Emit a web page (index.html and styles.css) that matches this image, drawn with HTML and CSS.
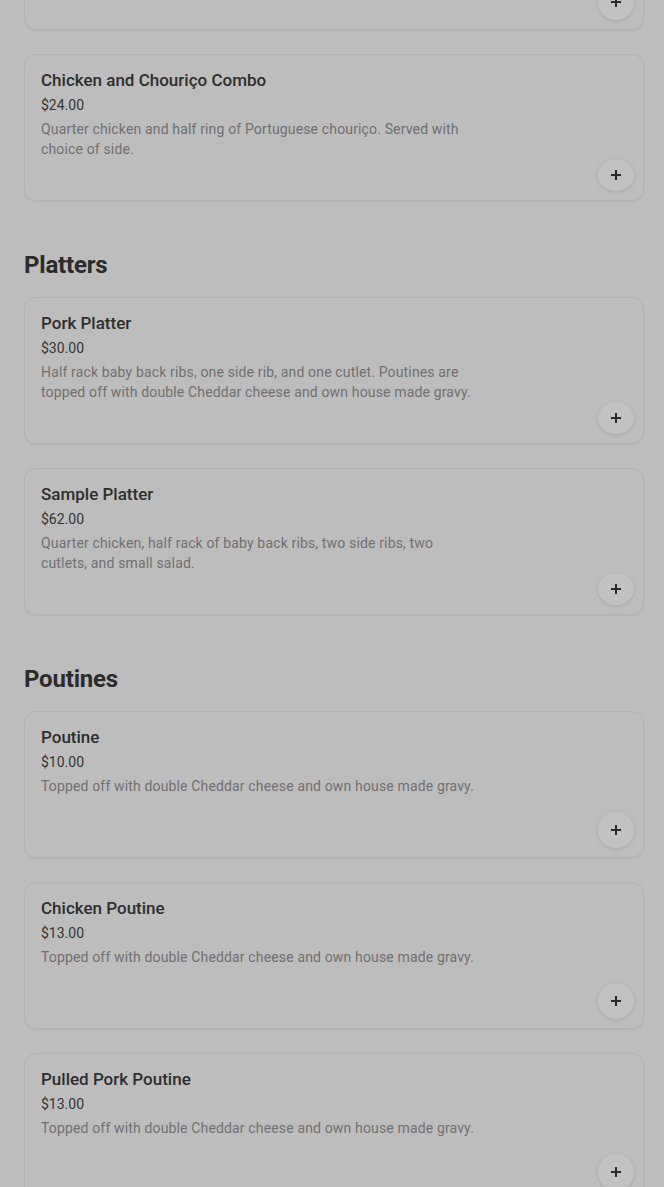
FILE: index.html
```html
<!DOCTYPE html>
<html>
<head>
<meta charset="utf-8">
<meta name="viewport" content="width=device-width, initial-scale=1">
<link rel="stylesheet" href="styles.css">
</head>
<body>
  <div class="menu">
    <div class="section">
      <div class="item">
        <button class="add"><svg viewBox="0 0 12 12"><path d="M6 1v10M1 6h10"/></svg></button>
      </div>
      <div class="item">
        <h3 class="item-name">Chicken and Chouriço Combo</h3>
        <p class="item-price">$24.00</p>
        <p class="item-desc">Quarter chicken and half ring of Portuguese chouriço. Served with choice of side.</p>
        <button class="add"><svg viewBox="0 0 12 12"><path d="M6 1v10M1 6h10"/></svg></button>
      </div>
    </div>

    <div class="section">
      <h2 class="section-title">Platters</h2>
      <div class="item">
        <h3 class="item-name">Pork Platter</h3>
        <p class="item-price">$30.00</p>
        <p class="item-desc">Half rack baby back ribs, one side rib, and one cutlet. Poutines are topped off with double Cheddar cheese and own house made gravy.</p>
        <button class="add"><svg viewBox="0 0 12 12"><path d="M6 1v10M1 6h10"/></svg></button>
      </div>
      <div class="item">
        <h3 class="item-name">Sample Platter</h3>
        <p class="item-price">$62.00</p>
        <p class="item-desc">Quarter chicken, half rack of baby back ribs, two side ribs, two cutlets, and small salad.</p>
        <button class="add"><svg viewBox="0 0 12 12"><path d="M6 1v10M1 6h10"/></svg></button>
      </div>
    </div>

    <div class="section">
      <h2 class="section-title">Poutines</h2>
      <div class="item">
        <h3 class="item-name">Poutine</h3>
        <p class="item-price">$10.00</p>
        <p class="item-desc">Topped off with double Cheddar cheese and own house made gravy.</p>
        <button class="add"><svg viewBox="0 0 12 12"><path d="M6 1v10M1 6h10"/></svg></button>
      </div>
      <div class="item">
        <h3 class="item-name">Chicken Poutine</h3>
        <p class="item-price">$13.00</p>
        <p class="item-desc">Topped off with double Cheddar cheese and own house made gravy.</p>
        <button class="add"><svg viewBox="0 0 12 12"><path d="M6 1v10M1 6h10"/></svg></button>
      </div>
      <div class="item">
        <h3 class="item-name">Pulled Pork Poutine</h3>
        <p class="item-price">$13.00</p>
        <p class="item-desc">Topped off with double Cheddar cheese and own house made gravy.</p>
        <button class="add"><svg viewBox="0 0 12 12"><path d="M6 1v10M1 6h10"/></svg></button>
      </div>
    </div>
  </div>
</body>
</html>
```
FILE: styles.css
```css
html {
  background-color: #bdbdbd;
}

body {
  margin: 0;
  font-family: Roboto, "Noto Sans", sans-serif;
  color: #2e2e2e;
  overflow: hidden;
}

.menu {
  margin-top: -117px;
  padding: 0 20px 0 24px;
}

.section {
  display: flex;
  flex-direction: column;
  gap: 24px;
}

.section-title {
  margin: 48px 0 -8px;
  font-size: 24px;
  font-weight: 700;
  line-height: 32px;
  color: #2b2b2b;
  letter-spacing: -0.2px;
}

.item {
  display: flex;
  flex-direction: column;
  height: 147px;
  box-sizing: border-box;
  padding: 15px 9px 9px 16px;
  border: 1px solid #b2b2b2;
  border-radius: 12px;
  box-shadow: 0 1px 2px rgba(0, 0, 0, 0.06);
}

.item-name {
  margin: 0;
  font-size: 17px;
  font-weight: 500;
  line-height: 20px;
  color: #2e2e2e;
}

.item-price {
  margin: 5px 0 0;
  font-size: 14px;
  line-height: 20px;
  color: #353535;
}

.item-desc {
  margin: 4px 0 0;
  max-width: 436px;
  font-size: 14px;
  line-height: 20px;
  letter-spacing: 0.15px;
  color: #707070;
}

.add {
  margin-top: auto;
  align-self: flex-end;
  display: flex;
  align-items: center;
  justify-content: center;
  width: 36px;
  height: 36px;
  padding: 0;
  border: none;
  border-radius: 50%;
  background-color: #c2c2c2;
  box-shadow: 0 1px 4px rgba(0, 0, 0, 0.12);
}

.add svg {
  width: 12px;
  height: 12px;
  fill: none;
  stroke: #2a2a2a;
  stroke-width: 2;
}
```
